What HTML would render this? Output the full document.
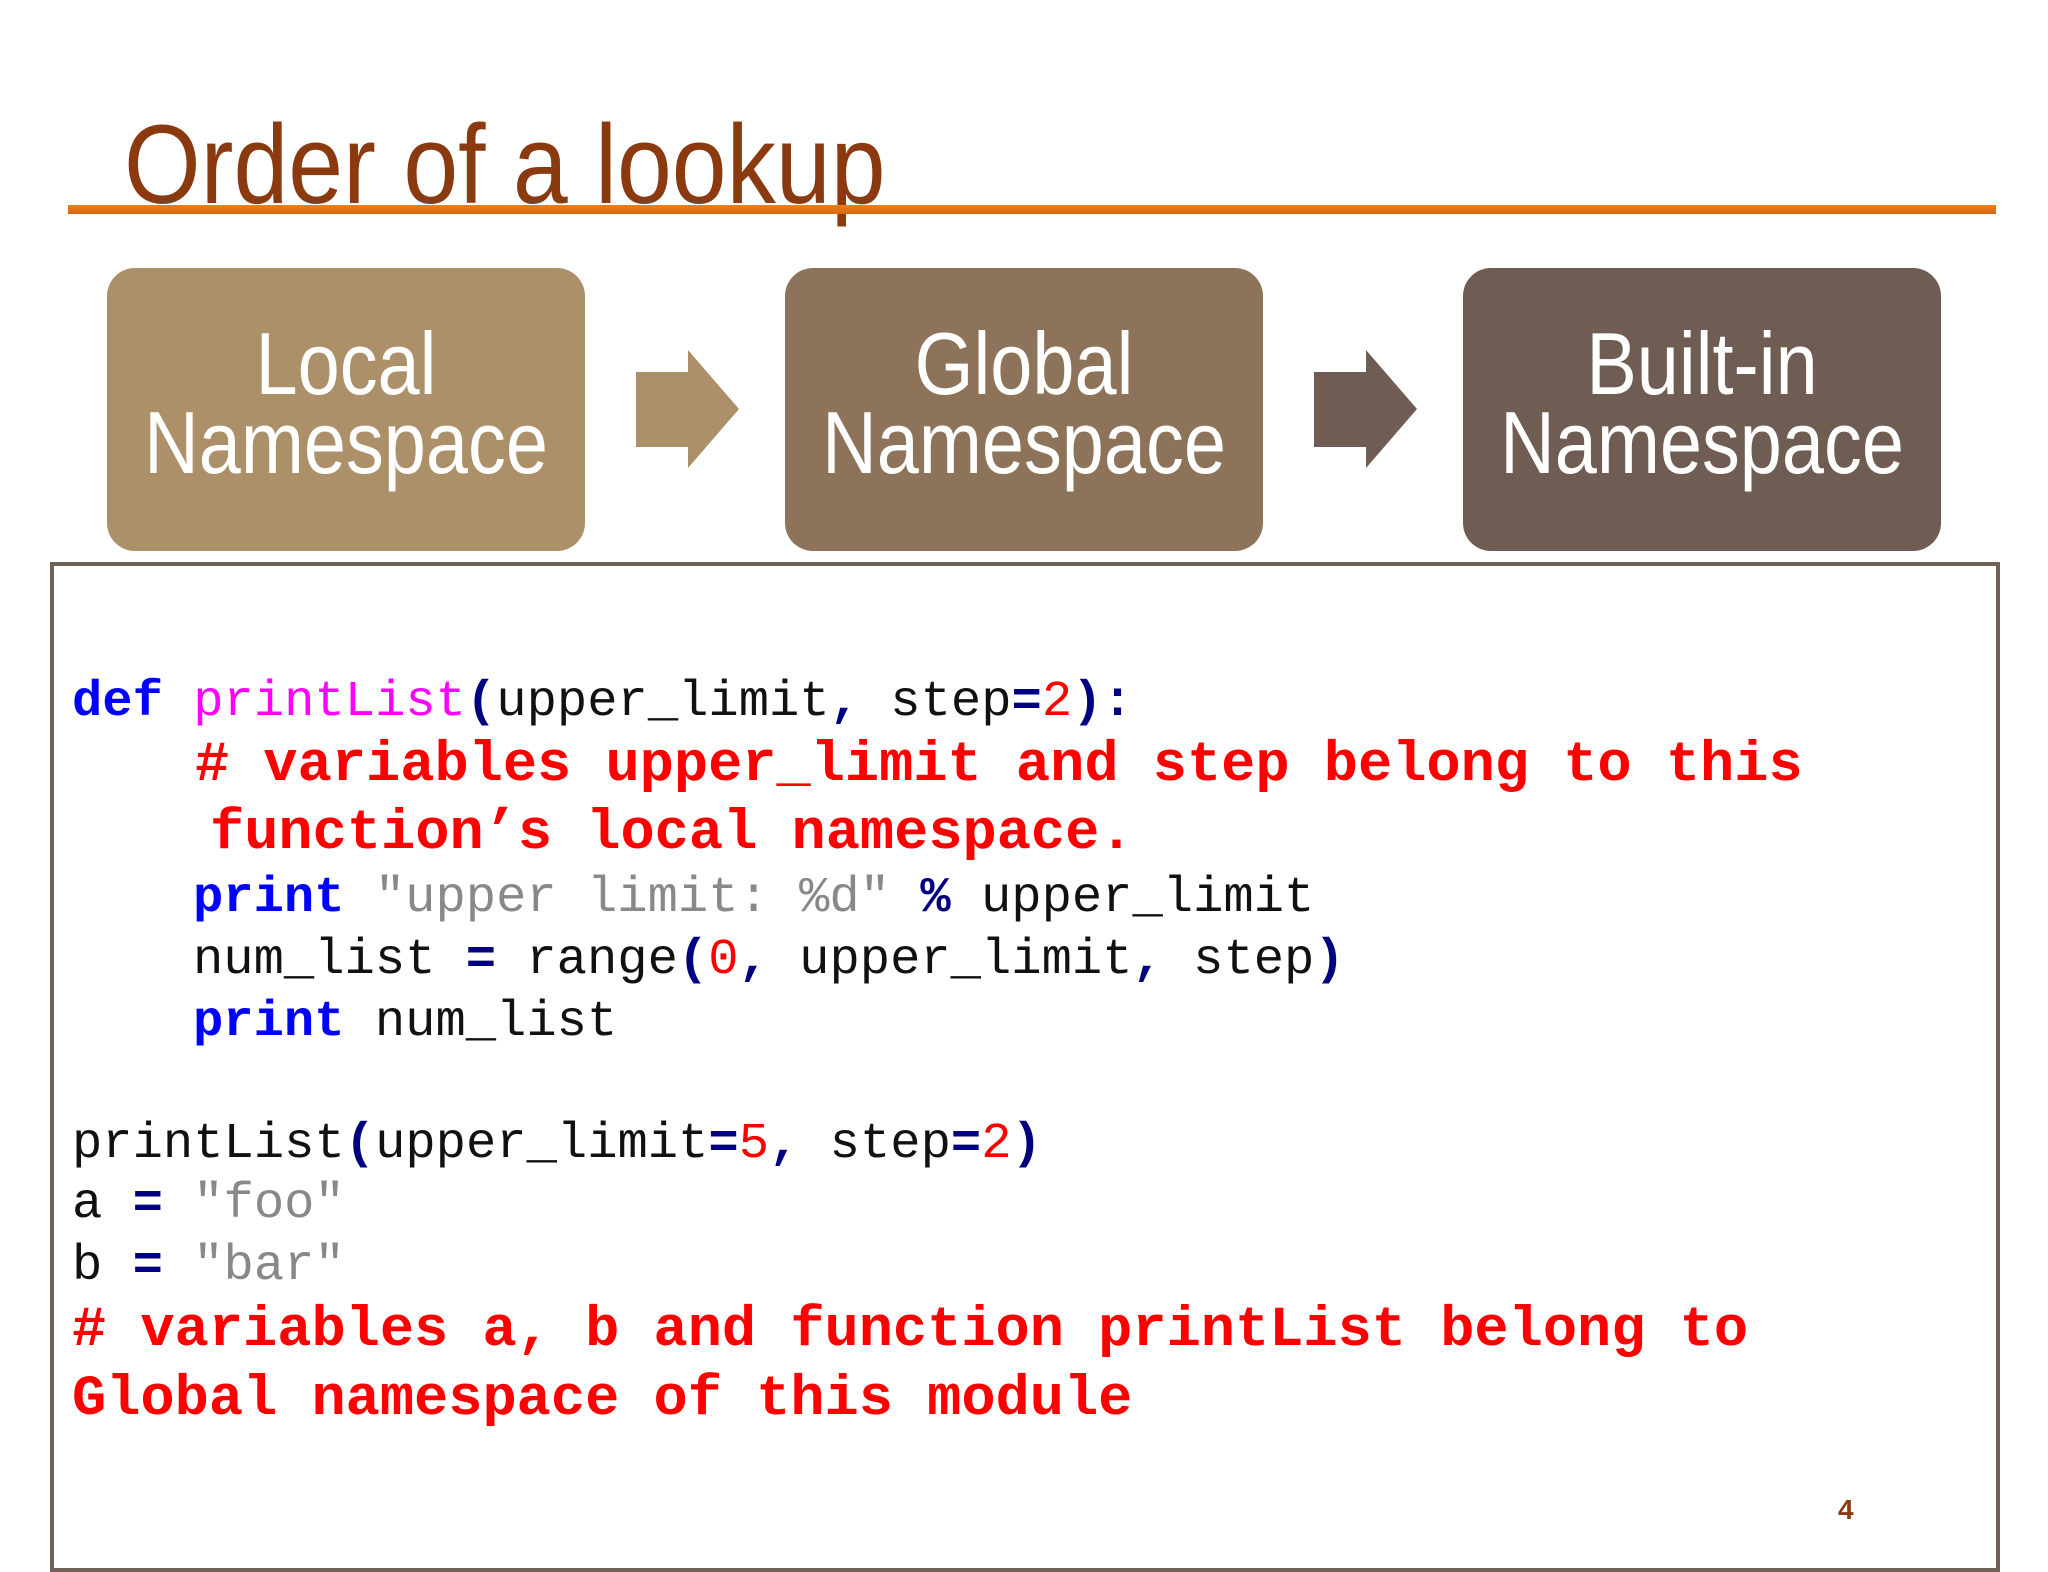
<!DOCTYPE html>
<html><head><meta charset="utf-8"><style>
body{margin:0;width:2048px;height:1536px;background:#fff;position:relative;overflow:hidden;font-family:"Liberation Sans",sans-serif}
.t{position:absolute;left:124px;top:98px;font-size:112px;color:#8b3a10;transform:scaleX(0.88);transform-origin:0 0;white-space:nowrap;line-height:1.2}
.line{position:absolute;left:68px;top:205px;width:1928px;height:9px;background:linear-gradient(#e8801e,#d86810)}
.box{position:absolute;top:268px;width:478px;height:283px;border-radius:28px;color:#fff;text-align:center}
.box div{position:absolute;left:0;width:100%;font-size:88px;line-height:1;transform:scaleX(0.86);white-space:nowrap}
.code{position:absolute;left:50px;top:562px;width:1950px;height:1010px;border:4px solid #6f6058;box-sizing:border-box}
.l{position:absolute;white-space:pre;font-family:"Liberation Mono",monospace;font-size:50.5px;line-height:1;color:#111}
.c{font-size:57px;color:#f00;font-weight:bold}
.k{color:#0000ff;font-weight:bold}.f{color:#ff00ff}.p{color:#000080;font-weight:bold}.n{color:#f00}.s{color:#888}
</style></head><body>
<div class="t">Order of a lookup</div>
<div class="line"></div>
<div class="box" style="left:107px;background:#ab9069"><div style="top:52px">Local</div><div style="top:131px">Namespace</div></div>
<div class="box" style="left:785px;background:#8d7359"><div style="top:52px">Global</div><div style="top:131px">Namespace</div></div>
<div class="box" style="left:1463px;background:#6f5c52"><div style="top:52px">Built-in</div><div style="top:131px">Namespace</div></div>
<svg style="position:absolute;left:0;top:0" width="2048" height="600">
<polygon points="636,372 688,372 688,350 739,409 688,468 688,447 636,447" fill="#ab9069"/>
<polygon points="1314,372 1366,372 1366,350 1417,409 1366,468 1366,447 1314,447" fill="#6f5c52"/>
</svg>
<div class="code"></div>
<div class="l" style="left:72px;top:678px"><span class="k">def</span> <span class="f">printList</span><span class="p">(</span>upper_limit<span class="p">,</span> step<span class="p">=</span><span class="n">2</span><span class="p">):</span></div>
<div class="l c" style="left:195px;top:738px"># variables upper_limit and step belong to this</div>
<div class="l c" style="left:210px;top:806px">function’s local namespace.</div>
<div class="l" style="left:193px;top:874px"><span class="k">print</span> <span class="s">"upper limit: %d"</span> <span class="p">%</span> upper_limit</div>
<div class="l" style="left:193px;top:936px">num_list <span class="p">=</span> range<span class="p">(</span><span class="n">0</span><span class="p">,</span> upper_limit<span class="p">,</span> step<span class="p">)</span></div>
<div class="l" style="left:193px;top:998px"><span class="k">print</span> num_list</div>
<div class="l" style="left:72px;top:1120px">printList<span class="p">(</span>upper_limit<span class="p">=</span><span class="n">5</span><span class="p">,</span> step<span class="p">=</span><span class="n">2</span><span class="p">)</span></div>
<div class="l" style="left:72px;top:1180px">a <span class="p">=</span> <span class="s">"foo"</span></div>
<div class="l" style="left:72px;top:1242px">b <span class="p">=</span> <span class="s">"bar"</span></div>
<div class="l c" style="left:72px;top:1303px"># variables a, b and function printList belong to</div>
<div class="l c" style="left:72px;top:1372px">Global namespace of this module</div>
<div style="position:absolute;left:1838px;top:1494px;font-size:28px;font-weight:bold;color:#8b3a10">4</div>
</body></html>
